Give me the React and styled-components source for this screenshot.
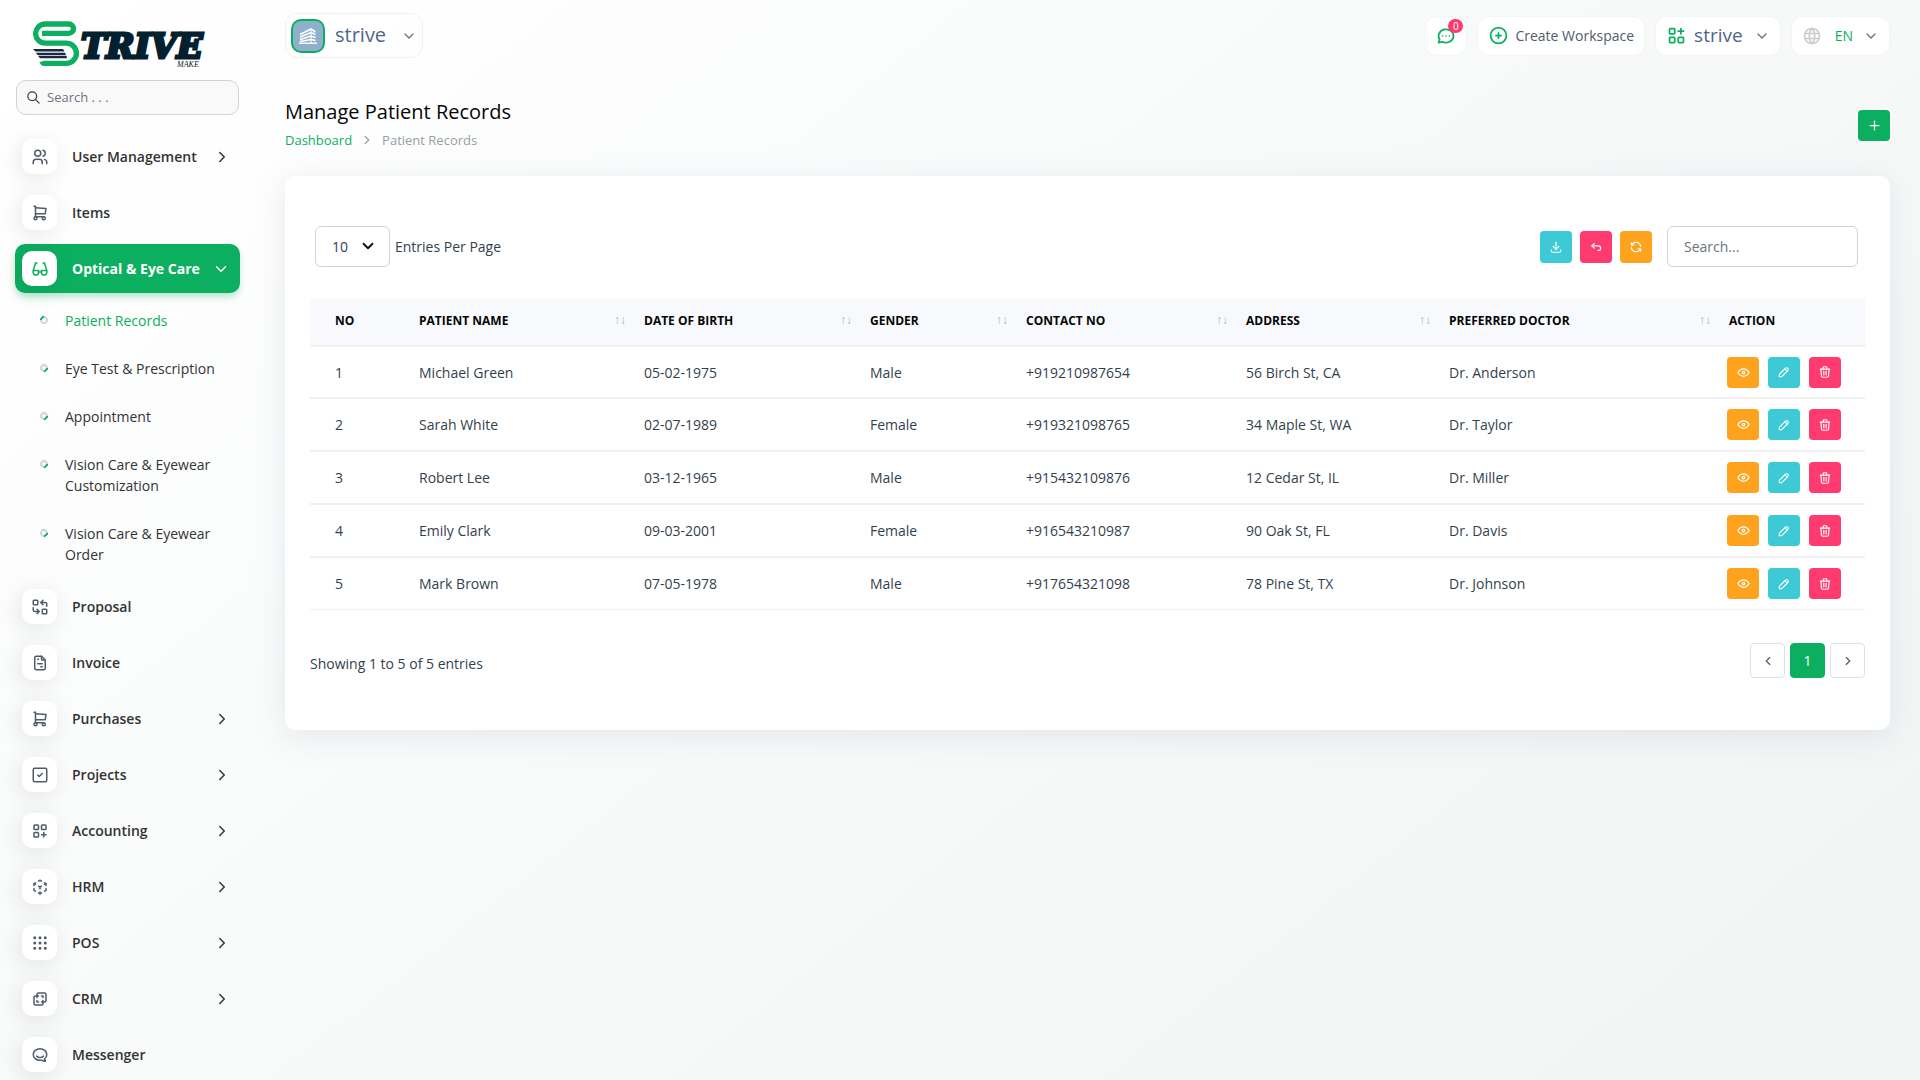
import React, { useState } from "react";
import styled, { createGlobalStyle, css } from "styled-components";
import {
  TbApps,
  TbArrowBackUp,
  TbBrandHipchat,
  TbChevronDown,
  TbChevronLeft,
  TbChevronRight,
  TbCirclePlus,
  TbDownload,
  TbEye,
  TbEyeglass,
  TbFileInvoice,
  TbGridDots,
  TbLayersDifference,
  TbLayoutGridAdd,
  TbPencil,
  TbPlus,
  TbRefresh,
  TbReplace,
  TbSearch,
  TbShoppingCart,
  TbSquareCheck,
  TbTrash,
  TbUsers,
  TbWorld,
} from "react-icons/tb";

const colors = {
  primary: "#0caf60",
  info: "#3ec9d6",
  danger: "#ff3a6e",
  warning: "#ffa21d",
  text: "#333f4d",
  border: "#ced4da",
};

const menu = [
  { label: "User Management", icon: TbUsers, more: true },
  { label: "Items", icon: TbShoppingCart },
  {
    label: "Optical & Eye Care",
    icon: TbEyeglass,
    children: [
      "Patient Records",
      "Eye Test & Prescription",
      "Appointment",
      "Vision Care & Eyewear Customization",
      "Vision Care & Eyewear Order",
    ],
  },
  { label: "Proposal", icon: TbReplace },
  { label: "Invoice", icon: TbFileInvoice },
  { label: "Purchases", icon: TbShoppingCart, more: true },
  { label: "Projects", icon: TbSquareCheck, more: true },
  { label: "Accounting", icon: TbLayoutGridAdd, more: true },
  { label: "HRM", icon: CubeIcon, more: true },
  { label: "POS", icon: TbGridDots, more: true },
  { label: "CRM", icon: TbLayersDifference, more: true },
  { label: "Messenger", icon: TbBrandHipchat },
];

// widths are shared out in proportion when the table grows or shrinks
const columns = [
  { label: "No", width: 99 },
  { label: "Patient Name", width: 225, sortable: true },
  { label: "Date Of Birth", width: 226, sortable: true },
  { label: "Gender", width: 156, sortable: true },
  { label: "Contact No", width: 220, sortable: true },
  { label: "Address", width: 203, sortable: true },
  { label: "Preferred Doctor", width: 280, sortable: true },
  { label: "Action", width: 146 },
];

const patients = [
  ["Michael Green", "05-02-1975", "Male", "+919210987654", "56 Birch St, CA", "Dr. Anderson"],
  ["Sarah White", "02-07-1989", "Female", "+919321098765", "34 Maple St, WA", "Dr. Taylor"],
  ["Robert Lee", "03-12-1965", "Male", "+915432109876", "12 Cedar St, IL", "Dr. Miller"],
  ["Emily Clark", "09-03-2001", "Female", "+916543210987", "90 Oak St, FL", "Dr. Davis"],
  ["Mark Brown", "07-05-1978", "Male", "+917654321098", "78 Pine St, TX", "Dr. Johnson"],
];

function CubeIcon({ size = 18 }) {
  return (
    <svg width={size} height={size} viewBox="0 0 24 24" fill="none" stroke="currentColor" strokeWidth="2" strokeLinecap="round" strokeLinejoin="round">
      <path d="M6 17.6l-2 -1.1v-2.5M4 10v-2.5l2 -1.1M10 4.1l2 -1.1l2 1.1M18 6.4l2 1.1v2.5M20 14v2.5l-2 1.1M14 19.9l-2 1.1l-2 -1.1" />
      <path d="M12 12l2 -1.1M18 8.6l2 -1.1M12 12v2.5M12 18.5v2.5M12 12l-2 -1.1M6 8.6l-2 -1.1" />
    </svg>
  );
}

function ChatIcon() {
  return (
    <svg width="20" height="20" viewBox="0 0 24 24" fill="none" stroke="currentColor" strokeWidth="2" strokeLinecap="round" strokeLinejoin="round">
      <path d="M3 20l1.3 -3.9a9 8 0 1 1 3.4 2.9l-4.7 1" />
      <path d="M12 12v.01M8 12v.01M16 12v.01" />
    </svg>
  );
}

function BuildingIcon() {
  return (
    <svg width="18" height="16" viewBox="0 0 18 16" fill="none" stroke="#fff">
      <path d="M1 6.5L12 1l4.5 3M1 9L12 4.5l4.5 2M1 11.5L12 8l4.5 1.5M1 13.5L12 11.5l4.5 1" strokeWidth="1.6" />
      <path d="M12 1v14" strokeWidth="1" />
      <path d="M0 15.2h18" strokeWidth="1.4" />
    </svg>
  );
}

function Logo() {
  return (
    <svg width="180" height="50" viewBox="0 0 180 50" role="img" aria-label="Strive Make">
      <path
        d="M9 15.3h26.8a4.65 4.65 0 0 0 0 -9.3H12.2a9.6 9.6 0 0 0 0 19.2h21.1a10.1 10.1 0 0 1 0 20.2H11q-1.5 -0.5 -2 -2"
        fill="none"
        stroke={colors.primary}
        strokeWidth="5.3"
      />
      <path d="M0 31h30l1.5 2.6h-29zM3 34.7h29l1 2.3h-28.5zM5 37.8h28.5l0.5 2.4h-27z" fill="#1b2740" />
      <text x="48" y="40" fontFamily="'DejaVu Serif', serif" fontWeight="700" fontStyle="italic" fontSize="34" fill="#03202f" stroke="#03202f" strokeWidth="3">TRIVE</text>
      <text x="144" y="49" fontFamily="'Liberation Serif', serif" fontStyle="italic" fontSize="8" fill="#03202f">MAKE</text>
    </svg>
  );
}

export default function App() {
  const [current, setCurrent] = useState("Patient Records");
  const [query, setQuery] = useState("");

  const rows = patients.filter((patient) =>
    patient.join(" ").toLowerCase().includes(query.toLowerCase())
  );

  return (
    <Page>
      <GlobalStyle />
      <Sidebar>
        <LogoLink href="#home">
          <Logo />
        </LogoLink>
        <SidebarSearch>
          <TbSearch size={15} />
          <input type="text" placeholder="Search . . ." aria-label="Search menu" />
        </SidebarSearch>
        <Menu>
          {menu.map(({ label, icon: Icon, more, children }) => (
            <li key={label}>
              <MenuLink href="#menu" $active={!!children}>
                <MenuIcon $active={!!children}>
                  <Icon size={18} />
                </MenuIcon>
                <span>{label}</span>
                {more && <TbChevronRight size={18} />}
                {children && <TbChevronDown size={18} />}
              </MenuLink>
              {children && (
                <SubMenu>
                  {children.map((child) => (
                    <li key={child}>
                      <SubLink
                        href="#page"
                        $active={child === current}
                        onClick={() => setCurrent(child)}
                      >
                        {child}
                      </SubLink>
                    </li>
                  ))}
                </SubMenu>
              )}
            </li>
          ))}
        </Menu>
      </Sidebar>

      <Main>
        <TopBar>
          <WorkspaceButton type="button">
            <Avatar>
              <BuildingIcon />
            </Avatar>
            <Brand $large>strive</Brand>
            <TbChevronDown size={16} />
          </WorkspaceButton>
          <TopActions>
            <TopButton type="button" aria-label="Messages">
              <ChatIcon />
              <Badge>0</Badge>
            </TopButton>
            <TopButton type="button">
              <TbCirclePlus size={21} />
              <span>Create Workspace</span>
            </TopButton>
            <TopButton type="button">
              <TbApps size={21} />
              <Brand>strive</Brand>
              <Caret size={16} />
            </TopButton>
            <TopButton type="button">
              <Globe size={20} />
              <Language>EN</Language>
              <Caret size={16} />
            </TopButton>
          </TopActions>
        </TopBar>

        <PageHeader>
          <div>
            <h4>Manage Patient Records</h4>
            <Breadcrumb>
              <a href="#dashboard">Dashboard</a>
              <TbChevronRight size={14} />
              <span>Patient Records</span>
            </Breadcrumb>
          </div>
          <IconButton type="button" aria-label="Create" $color={colors.primary}>
            <TbPlus size={15} />
          </IconButton>
        </PageHeader>

        <Card>
          <Toolbar>
            <PageSize>
              <SelectBox>
                <select id="page-size" defaultValue="10">
                  <option>10</option>
                  <option>25</option>
                  <option>50</option>
                </select>
                <TbChevronDown size={18} strokeWidth={2.5} />
              </SelectBox>
              <label htmlFor="page-size">Entries Per Page</label>
            </PageSize>
            <Tools>
              <IconButton type="button" aria-label="Export" $color={colors.info}>
                <TbDownload size={14} />
              </IconButton>
              <IconButton type="button" aria-label="Reset" $color={colors.danger}>
                <TbArrowBackUp size={14} />
              </IconButton>
              <IconButton type="button" aria-label="Reload" $color={colors.warning}>
                <TbRefresh size={14} />
              </IconButton>
              <TableSearch
                type="search"
                placeholder="Search..."
                aria-label="Search records"
                value={query}
                onChange={(e) => setQuery(e.target.value)}
              />
            </Tools>
          </Toolbar>

          <Table>
            <colgroup>
              {columns.map((column) => (
                <col key={column.label} width={column.width} />
              ))}
            </colgroup>
            <thead>
              <tr>
                {columns.map((column) => (
                  <th key={column.label}>
                    {column.sortable ? (
                      <SortButton type="button">
                        {column.label}
                        <SortArrows>
                          <span>↑</span>
                          <span>↓</span>
                        </SortArrows>
                      </SortButton>
                    ) : (
                      column.label
                    )}
                  </th>
                ))}
              </tr>
            </thead>
            <tbody>
              {rows.map((patient, index) => (
                <tr key={patient[0]}>
                  <td>{index + 1}</td>
                  {patient.map((value) => (
                    <td key={value}>{value}</td>
                  ))}
                  <td>
                    <RowActions>
                      <IconButton type="button" aria-label="View" $color={colors.warning}>
                        <TbEye size={15} />
                      </IconButton>
                      <IconButton type="button" aria-label="Edit" $color={colors.info}>
                        <TbPencil size={14} />
                      </IconButton>
                      <IconButton type="button" aria-label="Delete" $color={colors.danger}>
                        <TbTrash size={14} />
                      </IconButton>
                    </RowActions>
                  </td>
                </tr>
              ))}
            </tbody>
          </Table>

          <TableFooter>
            <p>Showing 1 to 5 of 5 entries</p>
            <Pager>
              <PageButton type="button" aria-label="Previous">
                <TbChevronLeft size={14} />
              </PageButton>
              <PageButton type="button" $active>
                1
              </PageButton>
              <PageButton type="button" aria-label="Next">
                <TbChevronRight size={14} />
              </PageButton>
            </Pager>
          </TableFooter>
        </Card>
      </Main>
    </Page>
  );
}

const GlobalStyle = createGlobalStyle`
  *,
  *::before {
    box-sizing: border-box;
  }
  body {
    margin: 0;
    font-family: "Open Sans", sans-serif;
    font-size: 14px;
    line-height: 21px;
    color: ${colors.text};
    background: #fff;
  }
  a {
    text-decoration: none;
    color: inherit;
  }
  ul {
    list-style: none;
    margin: 0;
    padding: 0;
  }
  button, input, select {
    font: inherit;
    color: inherit;
  }
  button {
    cursor: pointer;
  }
  svg {
    display: block;
    flex: none;
  }
`;

const Page = styled.div`
  display: grid;
  grid-template-columns: 255px minmax(0, 1fr);
  min-height: 100vh;
  background: linear-gradient(141deg, rgba(240, 244, 243, 0) 3%, #f0f4f3 100%);
`;

const Sidebar = styled.aside`
  display: flex;
  flex-direction: column;
  height: 100vh;
  position: sticky;
  top: 0;
`;

const LogoLink = styled.a`
  padding: 18px 0 12px 33px;
`;

const SidebarSearch = styled.label`
  display: flex;
  align-items: center;
  gap: 6px;
  height: 35px;
  flex: none;
  margin: 0 16px 15px;
  padding: 0 9px;
  border: 1px solid ${colors.border};
  border-radius: 10px;
  background: #f9f9fa;

  input {
    width: 100%;
    border: 0;
    padding: 0;
    outline: none;
    background: none;
    font-size: 13px;
  }
  input::placeholder {
    color: #6c757d;
  }
`;

const Menu = styled.ul`
  flex: 1;
  min-height: 0;
  overflow: hidden;
  padding: 2px 15px 0;
`;

const MenuLink = styled.a`
  display: flex;
  align-items: center;
  height: 49px;
  margin-bottom: 7px;
  padding: 0 9px 0 7px;
  border-radius: 10px;
  font-weight: 600;
  color: #333;

  > span:nth-child(2) {
    flex: 1;
    margin-left: 15px;
    white-space: nowrap;
  }

  ${({ $active }) =>
    $active &&
    css`
      margin-bottom: 4px;
      padding-right: 10px;
      font-weight: 700;
      color: #fff;
      background: ${colors.primary};
      box-shadow: 0 5px 7px -1px rgba(12, 175, 96, 0.3);
    `}
`;

const MenuIcon = styled.span`
  display: grid;
  place-items: center;
  flex: none;
  width: 35px;
  height: 35px;
  border-radius: 10px;
  background: #fff;
  color: ${({ $active }) => ($active ? colors.primary : "#525b69")};
  box-shadow: -3px 4px 23px rgba(0, 0, 0, 0.1);
`;

const SubMenu = styled.ul`
  margin-bottom: 3px;
`;

const SubLink = styled.a`
  display: grid;
  grid-template-columns: 8px 1fr;
  gap: 17px;
  padding: 13px 15px 14px 25px;
  font-weight: 500;
  color: ${({ $active }) => ($active ? colors.primary : "#333")};

  &::before {
    content: "";
    width: 8px;
    height: 8px;
    margin-top: 6px;
    border: 2px solid ${colors.border};
    border-${({ $active }) => ($active ? "left" : "right")}-color: ${colors.primary};
    border-radius: 50%;
    transform: rotate(45deg);
  }
`;

const Main = styled.main`
  padding: 13px 30px 24px;
`;

const TopBar = styled.header`
  display: flex;
  justify-content: space-between;
  align-items: center;
  height: 45px;
`;

const WorkspaceButton = styled.button`
  display: flex;
  align-items: center;
  gap: 9px;
  height: 45px;
  padding: 0 5px;
  border: 1px solid #f1f1f1;
  border-radius: 12px;
  background: rgba(255, 255, 255, 0.5);

  > svg {
    margin-left: 5px;
    color: #6b7380;
  }
`;

const Avatar = styled.span`
  display: grid;
  place-items: center;
  width: 34px;
  height: 34px;
  border: 2px solid ${colors.primary};
  border-radius: 10px;
  background: #8fb0cb;
`;

const Brand = styled.span`
  padding: 0 1px 2px;
  font-size: ${({ $large }) => ($large ? "20px" : "19px")};
  line-height: 24px;
  color: #51658a;
`;

const TopActions = styled.div`
  display: flex;
  gap: 10px;
`;

const TopButton = styled.button`
  display: flex;
  align-items: center;
  gap: 6px;
  position: relative;
  height: 40px;
  padding: 0 10px;
  border: 1px solid #f3f4f4;
  border-radius: 12px;
  background: #fff;
  color: #525b69;
  font-weight: 500;

  > svg:first-child {
    color: ${colors.primary};
  }
`;

const Badge = styled.span`
  position: absolute;
  top: 2px;
  right: 3px;
  width: 15px;
  height: 14px;
  border-radius: 7px;
  background: ${colors.danger};
  color: #fff;
  font-size: 10px;
  line-height: 14px;
`;

const Caret = styled(TbChevronDown)`
  margin-left: 4px;
  color: #6b7380;
`;

const Globe = styled(TbWorld)`
  &&& {
    color: #ccc;
  }
`;

const Language = styled.span`
  margin-left: 7px;
  color: ${colors.primary};
`;

const PageHeader = styled.div`
  display: flex;
  justify-content: space-between;
  align-items: center;
  margin: 40px 0 24px;

  h4 {
    margin: 0 0 4px;
    font-size: 20px;
    line-height: 28px;
    font-weight: 500;
    color: #060606;
  }
`;

const Breadcrumb = styled.nav`
  display: flex;
  align-items: center;
  gap: 8px;
  padding-bottom: 2px;
  font-size: 13px;
  line-height: 20px;
  color: #999da3;

  a {
    color: ${colors.primary};
  }
`;

const IconButton = styled.button`
  display: grid;
  place-items: center;
  width: 32px;
  height: 31px;
  padding: 0;
  border: 0;
  border-radius: 4px;
  background: ${({ $color }) => $color};
  color: #fff;
`;

const Card = styled.section`
  padding: 50px 25px 52px;
  border-radius: 10px;
  background: #fff;
  box-shadow: 0 6px 30px rgba(182, 186, 203, 0.3);
`;

const Toolbar = styled.div`
  display: flex;
  justify-content: space-between;
  align-items: center;
  margin: 0 7px 31px 5px;
`;

const PageSize = styled.div`
  display: flex;
  align-items: center;
  gap: 5px;
`;

const SelectBox = styled.div`
  position: relative;

  select {
    appearance: none;
    width: 75px;
    height: 41px;
    padding: 0 16px;
    border: 1px solid ${colors.border};
    border-radius: 6px;
    background: #fff;
  }
  svg {
    position: absolute;
    right: 13px;
    top: 11px;
    color: #111;
    pointer-events: none;
  }
`;

const Tools = styled.div`
  display: flex;
  align-items: center;
  gap: 8px;

  button {
    height: 32px;
  }
`;

const TableSearch = styled.input`
  width: 191px;
  height: 41px;
  margin-left: 7px;
  padding: 0 16px;
  border: 1px solid ${colors.border};
  border-radius: 6px;
  background: #fff;

  &::placeholder {
    color: #6c757d;
  }
`;

const Table = styled.table`
  width: 100%;
  table-layout: fixed;
  border-collapse: separate;
  border-spacing: 0;

  th,
  td {
    padding: 0 10px;
    text-align: left;
    border-bottom: 2px solid #f1f1f1;
  }
  th:first-child,
  td:first-child {
    padding-left: 25px;
  }
  th {
    height: 49px;
    padding-bottom: 3px;
    font-size: 12px;
    font-weight: 700;
    text-transform: uppercase;
    color: #060606;
    background: #f8f9fd;
  }
  td {
    height: 53px;
  }
  td:last-child {
    padding-left: 8px;
  }
  tbody tr:first-child td {
    height: 52px;
  }
  tbody tr:last-child td {
    height: 52px;
    border-bottom-width: 1px;
  }
`;

const SortButton = styled.button`
  display: flex;
  justify-content: space-between;
  align-items: center;
  width: 100%;
  padding: 0;
  border: 0;
  background: none;
  text-transform: inherit;
`;

const SortArrows = styled.span`
  display: flex;
  margin-right: -2px;
  font-family: "Liberation Sans", sans-serif;
  font-size: 12px;
  font-weight: 400;
  color: #b4b6bb;
`;

const RowActions = styled.div`
  display: flex;
  gap: 9px;
`;

const TableFooter = styled.div`
  display: flex;
  justify-content: space-between;
  align-items: center;
  margin-top: 33px;

  p {
    margin: 0;
    padding-top: 6px;
  }
`;

const Pager = styled.div`
  display: flex;
  gap: 5px;
`;

const PageButton = styled.button`
  display: grid;
  place-items: center;
  width: 35px;
  height: 35px;
  padding: 0;
  border: 1px solid ${({ $active }) => ($active ? colors.primary : "#dee2e6")};
  border-radius: 4px;
  background: ${({ $active }) => ($active ? colors.primary : "#fff")};
  color: ${({ $active }) => ($active ? "#fff" : "#525b69")};
`;
